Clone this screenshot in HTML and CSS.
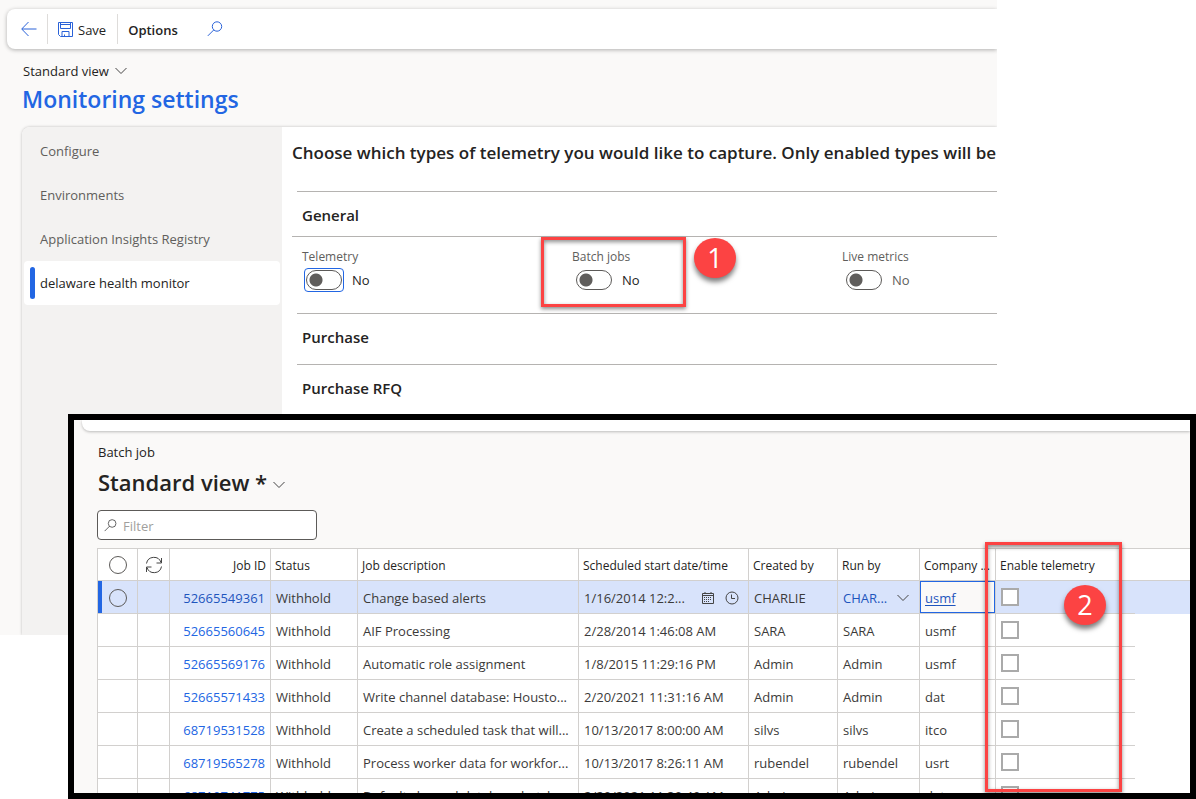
FILE: index.html
```html
<!DOCTYPE html>
<html lang="en">
<head>
    <meta charset="utf-8"/>
    <meta name="viewport" content="width=device-width,initial-scale=1">
    <title>Monitoring settings</title>
    <link rel="stylesheet" href="styles.css">
</head>
<body>
<svg class="defs" width="0" height="0">
    <symbol id="chevron" viewBox="0 0 12 8"><path d="M.5 1l5.500 5.500L11.500 1"/></symbol>
    <symbol id="search" viewBox="0 0 16 16"><circle cx="10" cy="5.500" r="4.700"/><path d="M6.800 8.900L.8 14.900"/></symbol>
</svg>
<div class="page">
    <div class="settings">
        <div class="toolbar">
            <button class="back" aria-label="Back">
                <svg width="16" height="16" viewBox="0 0 16 16"><path d="M15.500 8H1M7.500 1L.7 8l6.800 7"/></svg>
            </button>
            <button class="save">
                <svg width="15" height="15" viewBox="0 0 15 15"><path d="M.5.5h14v14H2.500l-2-2zM2.500.5v6h10v-6M2.500 2.500h10M4 14.500V9.500h7v5M6.500 14.500v-2"/></svg>
                <span>Save</span>
            </button>
            <button class="options"><span>Options</span></button>
            <button class="find" aria-label="Search"><svg width="16" height="16"><use href="#search"/></svg></button>
        </div>
        <button class="view">Standard view <svg width="12" height="8"><use href="#chevron"/></svg></button>
        <h1>Monitoring settings</h1>
        <div class="card">
            <nav>
                <a href="#">Configure</a>
                <a href="#">Environments</a>
                <a href="#">Application Insights Registry</a>
                <a href="#" class="on">delaware health monitor</a>
            </nav>
            <main>
                <h2>Choose which types of telemetry you would like to capture. Only enabled types will be</h2>
                <section class="first">
                    <h3>General</h3>
                    <div class="fields">
                        <div class="field">
                            <label for="telemetry">Telemetry</label>
                            <div class="switch"><span class="ring focus"><input type="checkbox" id="telemetry"></span><span>No</span></div>
                        </div>
                        <div class="field">
                            <label for="batch">Batch jobs</label>
                            <div class="switch"><span class="ring"><input type="checkbox" id="batch"></span><span>No</span></div>
                        </div>
                        <div class="field">
                            <label for="live">Live metrics</label>
                            <div class="switch dim"><span class="ring"><input type="checkbox" id="live"></span><span>No</span></div>
                        </div>
                    </div>
                </section>
                <section><h3>Purchase</h3></section>
                <section><h3>Purchase RFQ</h3></section>
            </main>
        </div>
    </div>

    <div class="window">
        <div class="bar"></div>
        <div class="caption">Batch job</div>
        <button class="title">Standard view * <svg width="12" height="8"><use href="#chevron"/></svg></button>
        <div class="filter">
            <svg width="13" height="13"><use href="#search"/></svg>
            <input type="text" placeholder="Filter" aria-label="Filter">
        </div>
        <table>
            <colgroup>
                <col class="c-pick"><col class="c-sync"><col class="c-id"><col class="c-status"><col class="c-desc">
                <col class="c-date"><col class="c-created"><col class="c-run"><col class="c-company"><col class="c-enable"><col>
            </colgroup>
            <thead>
                <tr>
                    <th class="pick"><input type="radio" name="all" aria-label="Select all"></th>
                    <th class="sync"><svg width="18" height="18" viewBox="0 0 18 18"><path d="M1.500 7.500a7.500 7.500 0 0 1 14.500-1M16.500 2v5h-5M16.500 10.500a7.500 7.500 0 0 1-14.500 1M1.500 16v-5h5"/></svg></th>
                    <th class="id">Job ID</th>
                    <th>Status</th>
                    <th>Job description</th>
                    <th>Scheduled start date/time</th>
                    <th>Created by</th>
                    <th>Run by</th>
                    <th>Company ...</th>
                    <th class="last">Enable telemetry</th>
                    <th class="rest"></th>
                </tr>
            </thead>
            <tbody>
                <tr class="selected">
                    <td class="pick"><input type="radio" name="row" aria-label="Select row"></td>
                    <td></td>
                    <td class="id"><a href="#">52665549361</a></td>
                    <td>Withhold</td>
                    <td>Change based alerts</td>
                    <td>
                        <div class="date">
                            <span>1/16/2014 12:2...</span>
                            <svg width="12" height="12" viewBox="0 0 12 12"><path d="M.5 1.500h11v10H.5zM.5 3.500h11M3 0v2M9 0v2"/><path class="dots" d="M2 5.500h8M2 7.500h8M2 9.500h6"/></svg>
                            <svg width="14" height="14" viewBox="0 0 14 14"><circle cx="7" cy="7" r="6"/><path d="M6.500 3.500v4h3.500"/></svg>
                        </div>
                    </td>
                    <td>CHARLIE</td>
                    <td><div class="pickbox"><a href="#">CHAR...</a><svg width="12" height="8"><use href="#chevron"/></svg></div></td>
                    <td class="active"><a href="#">usmf</a></td>
                    <td class="last"><input type="checkbox" aria-label="Enable telemetry"></td>
                    <td class="rest"></td>
                </tr>
                <tr>
                    <td></td><td></td><td class="id"><a href="#">52665560645</a></td><td>Withhold</td><td>AIF Processing</td>
                    <td>2/28/2014 1:46:08 AM</td><td>SARA</td><td>SARA</td><td>usmf</td>
                    <td class="last"><input type="checkbox" aria-label="Enable telemetry"></td><td class="rest"></td>
                </tr>
                <tr>
                    <td></td><td></td><td class="id"><a href="#">52665569176</a></td><td>Withhold</td><td>Automatic role assignment</td>
                    <td>1/8/2015 11:29:16 PM</td><td>Admin</td><td>Admin</td><td>usmf</td>
                    <td class="last"><input type="checkbox" aria-label="Enable telemetry"></td><td class="rest"></td>
                </tr>
                <tr>
                    <td></td><td></td><td class="id"><a href="#">52665571433</a></td><td>Withhold</td><td>Write channel database: Housto...</td>
                    <td>2/20/2021 11:31:16 AM</td><td>Admin</td><td>Admin</td><td>dat</td>
                    <td class="last"><input type="checkbox" aria-label="Enable telemetry"></td><td class="rest"></td>
                </tr>
                <tr>
                    <td></td><td></td><td class="id"><a href="#">68719531528</a></td><td>Withhold</td><td>Create a scheduled task that will...</td>
                    <td>10/13/2017 8:00:00 AM</td><td>silvs</td><td>silvs</td><td>itco</td>
                    <td class="last"><input type="checkbox" aria-label="Enable telemetry"></td><td class="rest"></td>
                </tr>
                <tr>
                    <td></td><td></td><td class="id"><a href="#">68719565278</a></td><td>Withhold</td><td>Process worker data for workfor...</td>
                    <td>10/13/2017 8:26:11 AM</td><td>rubendel</td><td>rubendel</td><td>usrt</td>
                    <td class="last"><input type="checkbox" aria-label="Enable telemetry"></td><td class="rest"></td>
                </tr>
                <tr>
                    <td></td><td></td><td class="id"><a href="#">68719741775</a></td><td>Withhold</td><td>Default channel database batch</td>
                    <td>2/20/2021 11:30:49 AM</td><td>Admin</td><td>Admin</td><td>dat</td>
                    <td class="last"><input type="checkbox" aria-label="Enable telemetry"></td><td class="rest"></td>
                </tr>
            </tbody>
        </table>
    </div>

    <!-- callouts over both screens -->
    <div class="frame frame1"></div>
    <div class="badge badge1">1</div>
    <div class="frame frame2"></div>
    <div class="badge badge2">2</div>
</div>
</body>
</html>
```
FILE: styles.css
```css
*{box-sizing:border-box;}
body{margin:0;background:#fff;color:#242322;font:13px/20px "Open Sans","Noto Sans",sans-serif;}
h1,h2,h3{margin:0;font-weight:600;}
a{color:#2266e3;text-decoration:none;}
button{border:0;padding:0;background:none;font:inherit;color:inherit;cursor:pointer;display:flex;align-items:center;}
svg{fill:none;stroke:#444;stroke-width:1;flex:none;}
.defs{position:absolute;}
.page{position:relative;height:100vh;min-height:640px;overflow:hidden;}

/* settings screen */
.settings{margin-right:199px;min-height:635px;padding-top:9px;background:#faf9f8;overflow:hidden;display:flex;flex-direction:column;align-items:flex-start;}
.toolbar{align-self:stretch;display:flex;align-items:center;height:40px;margin-left:7px;padding-left:14px;background:#fff;border-radius:8px 0 0 8px;box-shadow:0 1px 4px rgba(0,0,0,.3);}
.toolbar svg{stroke:#2a62d8;}
.toolbar button{height:30px;}
.toolbar span{padding-top:2px;}
.toolbar .save{gap:5px;margin-left:10px;padding:0 11px 0 10px;border-left:1px solid #dedcda;border-right:1px solid #dedcda;}
.options{margin-left:10px;font-weight:600;}
.find{margin-left:29px;}
.view{gap:6px;margin:12px 0 0 23px;}
h1{margin-left:22px;font-size:23px;line-height:36px;color:#2266e3;}
.card{flex:1;align-self:stretch;display:flex;margin:10px 0 0 22px;background:#fff;border-radius:8px 0 0 0;box-shadow:0 0 3px rgba(0,0,0,.25);overflow:hidden;}
nav{flex:none;width:260px;padding:2px;background:#f3f2f1;}
nav a{display:block;height:44px;padding-left:16px;line-height:44px;color:#605e5c;}
nav .on{display:flex;align-items:center;gap:5px;width:256px;padding-left:6px;background:#fff;border-radius:4px;color:#242322;}
nav .on:before{content:'';width:5px;height:32px;border-radius:3px;background:#2266e3;}
main{flex:1;min-width:0;padding:14px 0 0 10px;}
h2{font-size:17px;line-height:24px;white-space:nowrap;}
section{margin-left:5px;border-top:1px solid #b5b3b1;}
section.first{margin-top:26px;}
h3{height:50px;padding-left:5px;font-size:15px;line-height:46px;}
.first h3{height:44px;}
.fields{display:flex;height:77px;margin-left:-5px;padding:9px 0 0 10px;border-top:1px solid #b5b3b1;}
.field{flex:none;width:270px;}
.field label{display:block;font-size:12px;line-height:22px;color:#605e5c;}
.switch{display:flex;align-items:center;gap:8px;margin-left:2px;}
.switch input{display:block;appearance:none;width:36px;height:20px;margin:1px;border:1px solid #5c5a58;border-radius:10px;background:radial-gradient(circle at 9px 9px,#605e5c 6px,transparent 7px);}
.ring{border:1px solid transparent;border-radius:4px;}
.focus{border-color:#2266e3;}
.dim span{color:#605e5c;}

/* batch job window */
.window{position:absolute;left:68px;top:414px;right:0;bottom:0;border:6px solid #000;background:#faf9f8;overflow:hidden;padding-left:23px;}
.bar{height:11px;margin-left:-15px;background:#fff;border-radius:0 0 0 8px;box-shadow:0 1px 3px rgba(0,0,0,.25);}
.caption{margin-top:11px;padding-left:1px;}
.title{gap:6px;margin-left:1px;font-size:22px;font-weight:600;line-height:40px;}
.title svg{margin-top:6px;}
.filter{display:flex;align-items:center;gap:6px;width:220px;height:30px;margin:8px 0;padding:0 6px;background:#fff;border:1px solid #5c5a58;border-radius:4px;}
.filter input{flex:1;min-width:0;border:0;outline:0;padding:2px 0 0;font:inherit;background:none;}
.filter input::placeholder{color:#a19f9d;}
table{width:100%;table-layout:fixed;border-spacing:0;background:#fff;}
.c-pick{width:41px;}
.c-sync{width:32px;}
.c-id{width:101px;}
.c-status{width:87px;}
.c-desc{width:221px;}
.c-date{width:170px;}
.c-created{width:89px;}
.c-run{width:82px;}
.c-company{width:76px;}
.c-enable{width:139px;}
th,td{height:33px;padding:2px 5px 0;border-right:1px solid #d2d0ce;border-bottom:1px solid #d2d0ce;text-align:left;white-space:nowrap;overflow:hidden;color:#3b3a39;}
th{padding:2px 4px 0;border-top:1px solid #d2d0ce;font-size:12px;font-weight:500;color:#242322;}
th:first-child,td:first-child{border-left:1px solid #d2d0ce;}
th.pick,th.sync{text-align:center;padding:0;}
th svg,th input,td input{display:block;margin:0 auto;}
.id{text-align:right;}
.last{border-right:0;}
td.last{padding-top:0;}
.rest{border-right:0;}
td.rest{border-bottom:0;}
.selected td{background:#d8e3fb;}
.selected a{color:#1e55bd;}
.selected .pick{padding:2px 4px 0 0;box-shadow:inset 4px 0 #2266e3;}
.selected .pick input{margin-left:11px;}
input[type=radio]{appearance:none;width:18px;height:18px;border:1px solid #5c5a58;border-radius:50%;}
td.last input{appearance:none;width:18px;height:18px;margin:0;border:2px solid #aaa;background:#fff;}
.date,.pickbox{display:flex;align-items:center;}
.date span,.pickbox a{flex:1;}
.date svg{margin-right:5px;}
.date svg:last-child{margin:0 4px 0 6px;}
.dots{stroke-dasharray:1 1;}
.pickbox svg{margin-right:5px;}
.selected .active{background:#faf9f8;box-shadow:inset 0 0 0 1px #2266e3;}
.active a{text-decoration:underline;text-underline-offset:2px;}

/* callouts */
.frame{position:absolute;border:3px solid #fc4343;box-shadow:0 2px 4px rgba(0,0,0,.45),inset 0 2px 4px rgba(0,0,0,.45);}
.frame1{left:541px;top:237px;width:145px;height:70px;}
.frame2{left:985px;top:542px;width:137px;height:250px;}
.badge{position:absolute;width:42px;height:40px;border-radius:50%;background:#fc4343;box-shadow:0 4px 5px rgba(0,0,0,.5);color:#fff;font-size:27px;line-height:40px;text-align:center;}
.badge1{left:694px;top:238px;}
.badge2{left:1064px;top:585px;}
```
